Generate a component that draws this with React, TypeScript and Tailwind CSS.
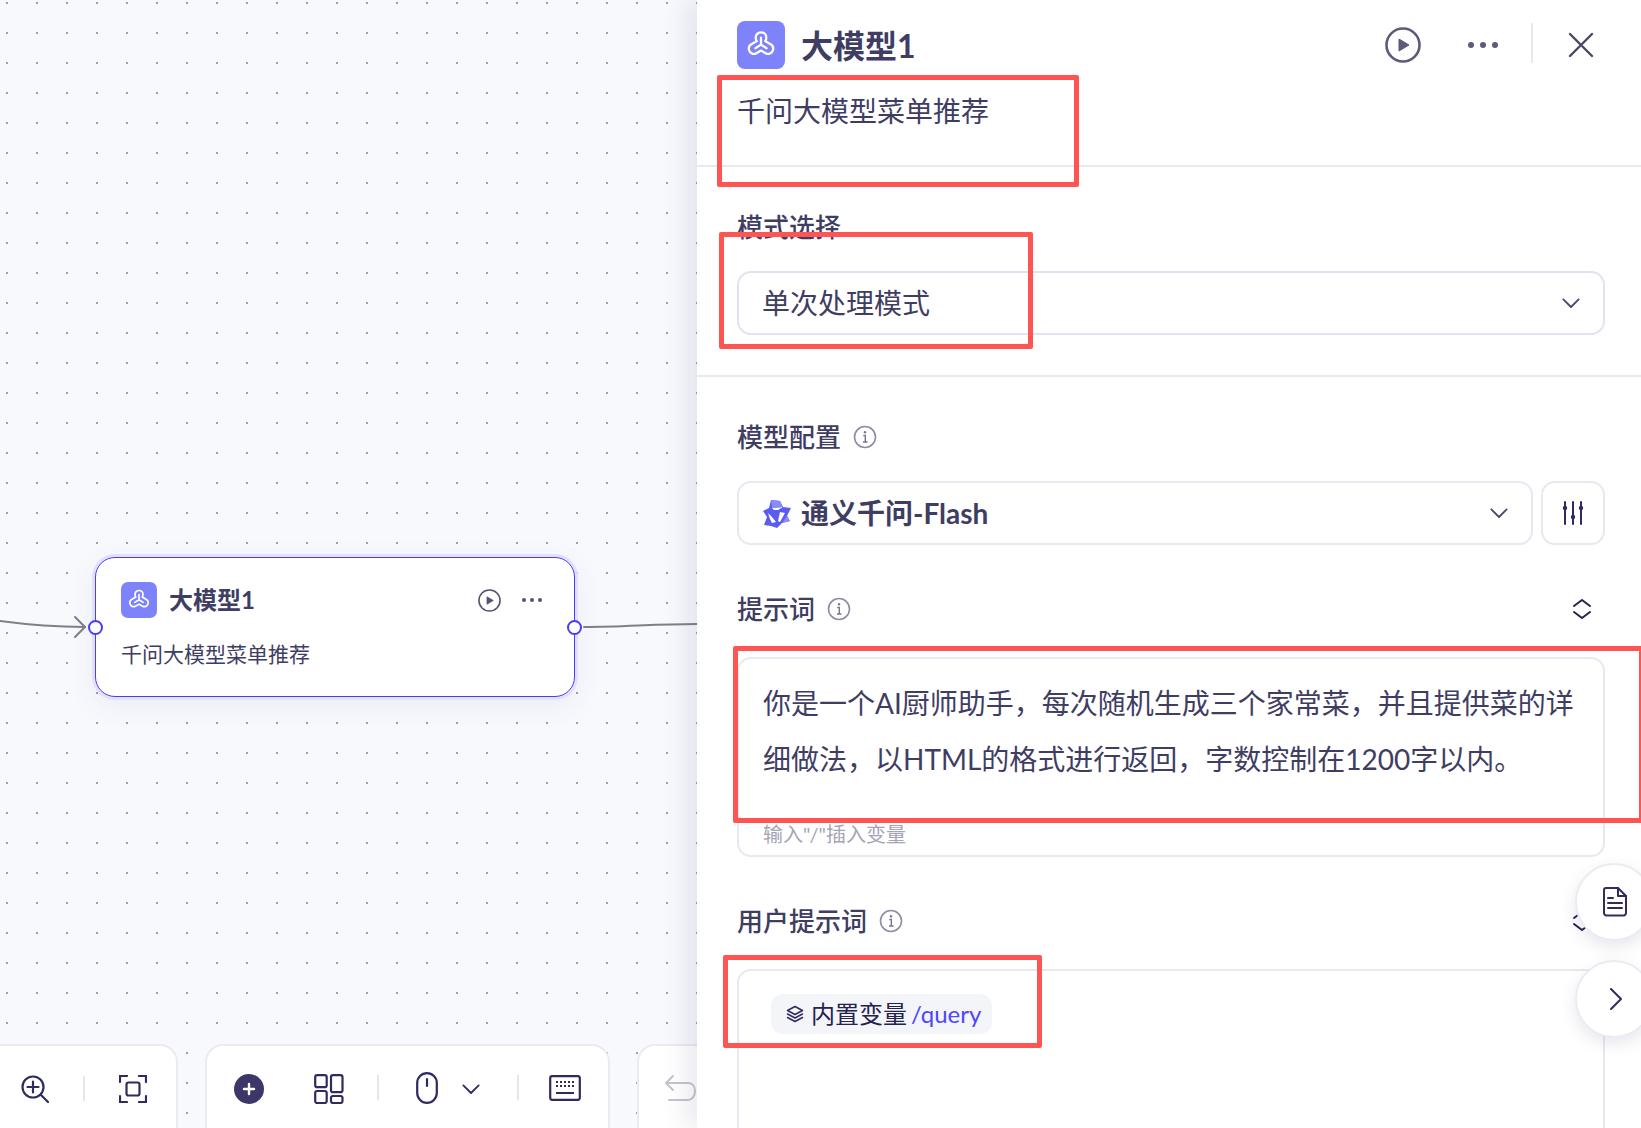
import React from 'react';

const LogoMark: React.FC<{ size: number }> = ({ size }) => (
  <svg width={size} height={size} viewBox="0 0 24 24" fill="none" stroke="#fff" strokeWidth="1.700" strokeLinejoin="round" strokeLinecap="round">
    <path d="M12 2.500c2.300 0 4 1.800 4 4 0 1-.3 1.800-.8 2.600l3.400 2c1.900.9 2.900 2.700 2.400 4.600-.6 2.200-2.800 3.500-4.900 2.800L12 16.200l-4.100 2.300c-2.100.7-4.300-.6-4.900-2.800-.5-1.900.5-3.700 2.400-4.600l3.400-2C8.300 8.300 8 7.500 8 6.500c0-2.200 1.700-4 4-4z" />
    <path d="M12 6.500v5.200l-4.200 2.700M12 11.700l4.200 2.700" />
  </svg>
);

const PlayCircle: React.FC<{ size: number; color: string; width: number }> = ({ size, color, width }) => (
  <svg width={size} height={size} viewBox="0 0 36 36" fill="none">
    <circle cx="18" cy="18" r="16.500" stroke={color} strokeWidth={width} />
    <path d="M14 12v12l10-6z" fill={color} stroke={color} strokeWidth="1" strokeLinejoin="round" />
  </svg>
);

const Dots: React.FC<{ r: number; gap: number; color: string }> = ({ r, gap, color }) => (
  <svg width={gap * 2 + r * 2} height={r * 2} viewBox={`0 0 ${gap * 2 + r * 2} ${r * 2}`}>
    <circle cx={r} cy={r} r={r} fill={color} />
    <circle cx={r + gap} cy={r} r={r} fill={color} />
    <circle cx={r + gap * 2} cy={r} r={r} fill={color} />
  </svg>
);

const Chevron: React.FC<{ w?: number; color?: string }> = ({ w = 18, color = '#4a4768' }) => (
  <svg width={w} height={w * 0.6} viewBox="0 0 20 12" fill="none" stroke={color} strokeWidth="2" strokeLinecap="round" strokeLinejoin="round">
    <path d="M1.500 1.500 10 10l8.500-8.500" />
  </svg>
);

const InfoIcon = () => (
  <svg width="24" height="24" viewBox="0 0 24 24" fill="none" className="ml-[12px]">
    <circle cx="12" cy="12" r="10.500" stroke="#8f8ca6" strokeWidth="1.600" />
    <path d="M10.300 10.500H12.300V17M10 17H14.500" stroke="#77748f" strokeWidth="1.400" />
    <circle cx="12" cy="7.200" r="1.200" fill="#77748f" />
  </svg>
);

const ExpandIcon = () => (
  <svg width="18" height="20" viewBox="0 0 18 20" fill="none" stroke="#25224f" strokeWidth="2" strokeLinecap="round" strokeLinejoin="round">
    <path d="M1 7 9 1l8 6M1 13l8 6 8-6" />
  </svg>
);

const TongyiLogo = () => (
  <svg width="28" height="29" viewBox="0 0 28 29" className="shrink-0">
    <path d="M8 1 17 2 20 8 28 9 24 17 27 22 19 24 14 29 8 27 1 26 4 18 0 12 6 9z" fill="#5b5cf0" />
    <path d="M9 9 20 8 15 11 11 11zM5 14 9 18 13 23 9 24 7 20zM17 13 22 14 17 23 15 22z" fill="#fff" />
    <path d="M8 1 17 2 20 8 9 9zM19 24 24 17 27 22z" fill="#8a8cf5" />
  </svg>
);

const SectionLabel: React.FC<{ text: string; info?: boolean; expand?: boolean; className?: string }> = ({ text, info, expand, className }) => (
  <div className={`flex items-center h-[36px] text-[26px] leading-[36px] font-medium text-[#403d63] ${className ?? ''}`}>
    <span>{text}</span>
    {info && <InfoIcon />}
    {expand && (
      <div className="ml-auto mr-[14px]">
        <ExpandIcon />
      </div>
    )}
  </div>
);

const ToolSep = () => <div className="w-[2px] h-[25px] bg-[#e6e6ee]" />;

const ink = '#2f2b5e';

const Toolbar = () => (
  <div className="absolute left-[-61px] top-[1044px] flex gap-[27px]">
    <div className="w-[239px] h-[110px] bg-white rounded-[18px] border-2 border-[#ebebf2] flex items-start pt-[29px] pl-[80px]">
      <svg width="28" height="28" viewBox="0 0 28 28" fill="none" stroke={ink} strokeWidth="2.200" strokeLinecap="round">
        <circle cx="12" cy="12" r="10.500" />
        <path d="M12 6.500v11M6.500 12h11M20 20l7 7" />
      </svg>
      <div className="ml-[34px] mt-[1px]"><ToolSep /></div>
      <svg width="28" height="28" viewBox="0 0 28 28" fill="none" stroke={ink} strokeWidth="2.200" strokeLinecap="round" className="ml-[34px]">
        <path d="M1 7V1h7M20 1h7v6M1 21v6h7M27 21v6h-7" />
        <rect x="7.500" y="7.500" width="13" height="13" rx="2" />
      </svg>
    </div>
    <div className="w-[405px] h-[110px] bg-white rounded-[18px] border-2 border-[#ebebf2] flex items-start pt-[28px] pl-[27px]">
      <div className="w-[30px] h-[30px] rounded-full bg-[#3b3768] flex items-center justify-center">
        <svg width="14" height="14" viewBox="0 0 14 14" stroke="#fff" strokeWidth="2.400" strokeLinecap="round">
          <path d="M7 2v10M2 7h10" />
        </svg>
      </div>
      <svg width="30" height="30" viewBox="0 0 30 30" fill="none" stroke={ink} strokeWidth="2.200" className="ml-[50px]">
        <rect x="1.200" y="1.200" width="11.500" height="12" rx="2" />
        <rect x="17" y="1.200" width="11.500" height="17" rx="2" />
        <rect x="1.200" y="17" width="11.500" height="12" rx="2" />
        <rect x="17" y="22" width="11.500" height="7" rx="2" />
      </svg>
      <div className="ml-[33px] mt-[1px]"><ToolSep /></div>
      <svg width="22" height="32" viewBox="0 0 22 32" fill="none" stroke={ink} strokeWidth="2.200" strokeLinecap="round" className="ml-[37px] -mt-[2px]">
        <rect x="1.200" y="1.200" width="19.600" height="29.600" rx="9.800" />
        <path d="M11 7v7" />
      </svg>
      <div className="ml-[24px] mt-[10px]">
        <Chevron w={18} color={ink} />
      </div>
      <div className="ml-[37px] mt-[1px]"><ToolSep /></div>
      <svg width="32" height="26" viewBox="0 0 32 26" fill="none" className="ml-[30px] mt-[1px]">
        <rect x="1.200" y="1.200" width="29.600" height="23.600" rx="2" stroke={ink} strokeWidth="2.200" />
        <path d="M7 7h2M11 7h2M15 7h2M19 7h2M23 7h2M7 11h2M11 11h2M15 11h2M19 11h2M23 11h2" stroke={ink} strokeWidth="2.200" />
        <path d="M7 18h18" stroke={ink} strokeWidth="2" />
      </svg>
    </div>
    <div className="w-[100px] h-[110px] bg-white rounded-[18px] border-2 border-[#ebebf2] flex items-start pt-[28px] pl-[26px]">
      <svg width="32" height="30" viewBox="0 0 32 30" fill="none" stroke="#c4c3cf" strokeWidth="2" strokeLinecap="round" strokeLinejoin="round">
        <path d="M8 2 1 9l7 7M1 9h22c4 0 7 3 7 8s-3 9-7 9H4" />
      </svg>
    </div>
  </div>
);

const NodeCard = () => (
  <div className="absolute left-[95px] top-[557px] w-[480px] h-[140px] bg-white rounded-[20px] border-[1.500px] border-[#4a3df0] shadow-[0_0_0_3px_#e2e0ff,0_8px_30px_rgba(80,80,150,0.08)] pl-[25px] pr-[32px] pt-[24px]">
    <div className="flex items-center h-[36px]">
      <div className="w-[36px] h-[36px] rounded-[7px] bg-[#7f83fb] flex items-center justify-center">
        <LogoMark size={24} />
      </div>
      <span className="ml-[12px] text-[24px] leading-[36px] font-bold text-[#403d63]">大模型1</span>
      <div className="ml-auto mr-[21px]">
        <PlayCircle size={23} color="#55526f" width={2.500} />
      </div>
      <Dots r={2} gap={8} color="#55526f" />
    </div>
    <div className="mt-[20px] text-[21px] leading-[32px] text-[#403d63]">千问大模型菜单推荐</div>
    <div className="absolute left-[-8px] top-[62px] w-[15px] h-[15px] rounded-full bg-white border-2 border-[#4a3df0]" />
    <div className="absolute right-[-8px] top-[62px] w-[15px] h-[15px] rounded-full bg-white border-2 border-[#4a3df0]" />
  </div>
);

const App: React.FC = () => {
  return (
    <div className="relative flex w-[1641px] h-[1128px] overflow-hidden bg-white font-['Lato','Noto_Sans_CJK_SC',sans-serif]">
      <div className="relative w-[697px] h-[1128px] shrink-0 overflow-hidden bg-[#f8f9fd] bg-[radial-gradient(circle,#7d8092_0.6px,transparent_1px)] bg-[length:30px_30px] bg-[position:-8px_-12px]">
        <svg width="697" height="700" className="absolute left-0 top-0" fill="none" stroke="#7f7f8a" strokeWidth="2" strokeLinecap="round" strokeLinejoin="round">
          <path d="M0 621c30 4 55 6 85 6" />
          <path d="M75 617l10 10-10 10" />
          <path d="M584 627c40 0 70-3 113-3" />
        </svg>
        <NodeCard />
        <Toolbar />
      </div>

      <div className="relative z-10 flex flex-col w-[944px] h-[1128px] overflow-hidden bg-white shadow-[-10px_0_24px_rgba(70,70,120,0.12)] shrink-0">
        <div className="pl-[40px] pr-[36px] pt-[21px] pb-[34px] border-b-2 border-[#e8e8f0]">
          <div className="flex items-center h-[48px]">
            <div className="w-[48px] h-[48px] rounded-[8px] bg-[#7f83fb] flex items-center justify-center">
              <LogoMark size={32} />
            </div>
            <span className="ml-[16px] mt-[1px] text-[32px] font-bold text-[#403d63]">大模型1</span>
            <div className="ml-auto">
              <PlayCircle size={36} color="#5d5a7a" width={2.600} />
            </div>
            <div className="ml-[47px]">
              <Dots r={3} gap={12} color="#5d5a7a" />
            </div>
            <div className="ml-[33px] w-[2px] h-[40px] bg-[#e8e8f0] -mt-[4px]" />
            <svg width="26" height="26" viewBox="0 0 26 26" stroke="#4a4768" strokeWidth="2.400" strokeLinecap="round" className="ml-[35px] mr-[11px]">
              <path d="M2 2l22 22M24 2 2 24" />
            </svg>
          </div>
          <div className="mt-[22px] text-[28px] leading-[40px] text-[#403d63]">千问大模型菜单推荐</div>
        </div>

        <div className="pl-[40px] pr-[36px] pt-[42px] pb-[40px] border-b-2 border-[#e8e8f0]">
          <SectionLabel text="模式选择" />
          <div className="mt-[26px] h-[64px] rounded-[14px] border-2 border-[#e2e3f1] flex items-center pl-[23px] pr-[23px]">
            <span className="text-[28px] text-[#403d63]">单次处理模式</span>
            <div className="ml-auto">
              <Chevron />
            </div>
          </div>
        </div>

        <div className="pl-[40px] pr-[36px] pt-[42px]">
          <SectionLabel text="模型配置" info />
          <div className="mt-[26px] flex gap-[8px]">
            <div className="flex-1 h-[64px] rounded-[14px] border-2 border-[#e8e8f0] flex items-center pl-[24px] pr-[23px]">
              <TongyiLogo />
              <span className="ml-[10px] text-[28px] font-bold text-[#403d63]">通义千问-Flash</span>
              <div className="ml-auto">
                <Chevron />
              </div>
            </div>
            <div className="w-[64px] h-[64px] rounded-[14px] border-2 border-[#e8e8f0] flex items-center justify-center">
              <svg width="22" height="24" viewBox="0 0 22 24" stroke="#2f2b5e" strokeWidth="2" fill="#2f2b5e" strokeLinecap="round">
                <path d="M3 1v22M11 1v22M19 1v22" />
                <circle cx="3" cy="7" r="2.200" stroke="none" />
                <circle cx="11" cy="16" r="2.200" stroke="none" />
                <circle cx="19" cy="7" r="2.200" stroke="none" />
              </svg>
            </div>
          </div>

          <SectionLabel text="提示词" info expand className="mt-[46px]" />
          <div className="mt-[30px] h-[200px] rounded-[14px] border-2 border-[#e8e8f0] pl-[24px] pr-[20px] pt-[16px] flex flex-col">
            <p className="text-[28px] leading-[56px] text-[#403d63]">
              你是一个AI厨师助手，每次随机生成三个家常菜，并且提供菜的详细做法，以HTML的格式进行返回，字数控制在1200字以内。
            </p>
            <div className="mt-[33px] text-[20px] leading-[28px] text-[#a5a4b5]">输入"/"插入变量</div>
          </div>

          <SectionLabel text="用户提示词" info expand className="mt-[46px]" />
          <div className="mt-[30px] h-[300px] rounded-[14px] border-2 border-[#e8e8f0] pl-[32px] pt-[23px]">
            <div className="inline-flex items-center h-[40px] pl-[15px] pr-[11px] rounded-[12px] bg-[#f4f5f8]">
              <svg width="18" height="18" viewBox="0 0 18 18" fill="none" stroke="#2f2b5e" strokeWidth="1.500" strokeLinejoin="round" strokeLinecap="round">
                <path d="M9 1.500 1.500 5.500 9 9.500l7.500-4z" />
                <path d="M1.500 9 9 13l7.500-4M1.500 12.500 9 16.500l7.500-4" />
              </svg>
              <span className="ml-[7px] text-[24px] text-[#25224f]">内置变量</span>
              <span className="ml-[4px] text-[24px] text-[#4f46ff]">/query</span>
            </div>
          </div>
        </div>
      </div>

      {/* floating buttons on the panel edge */}
      <div className="absolute z-20 left-[1575px] top-[863px] flex flex-col gap-[19px]">
        <div className="w-[78px] h-[78px] rounded-full bg-white border-2 border-[#ebebf2] shadow-[0_6px_16px_rgba(60,60,110,0.12)] flex items-center pl-[26px]">
          <svg width="24" height="30" viewBox="0 0 24 30" fill="none" stroke="#2f2b5e" strokeWidth="2" strokeLinejoin="round" strokeLinecap="round">
            <path d="M3 1h12l8 8v17a2.500 2.500 0 0 1-2.500 2.500h-17A2.500 2.500 0 0 1 1 26V3a2 2 0 0 1 2-2z" />
            <path d="M15 1v8h8M5 11h5M5 16h14M5 21h14" />
          </svg>
        </div>
        <div className="w-[78px] h-[78px] rounded-full bg-white border-2 border-[#ebebf2] shadow-[0_6px_16px_rgba(60,60,110,0.12)] flex items-center pl-[33px]">
          <svg width="12" height="22" viewBox="0 0 12 22" fill="none" stroke="#2f2b5e" strokeWidth="2" strokeLinecap="round" strokeLinejoin="round">
            <path d="M1 1l10 10L1 21" />
          </svg>
        </div>
      </div>

      {/* red annotation boxes drawn over the screenshot */}
      <div className="absolute z-30 left-[717px] top-[75px] w-[362px] h-[112px] border-[5px] border-[#ff5552] rounded-[2px]" />
      <div className="absolute z-30 left-[719px] top-[232px] w-[314px] h-[117px] border-[5px] border-[#ff5552] rounded-[2px]" />
      <div className="absolute z-30 left-[733px] top-[646px] w-[911px] h-[177px] border-[5px] border-[#ff5552] rounded-[2px]" />
      <div className="absolute z-30 left-[723px] top-[955px] w-[319px] h-[93px] border-[5px] border-[#ff5552] rounded-[2px]" />
    </div>
  );
};

export default App;
